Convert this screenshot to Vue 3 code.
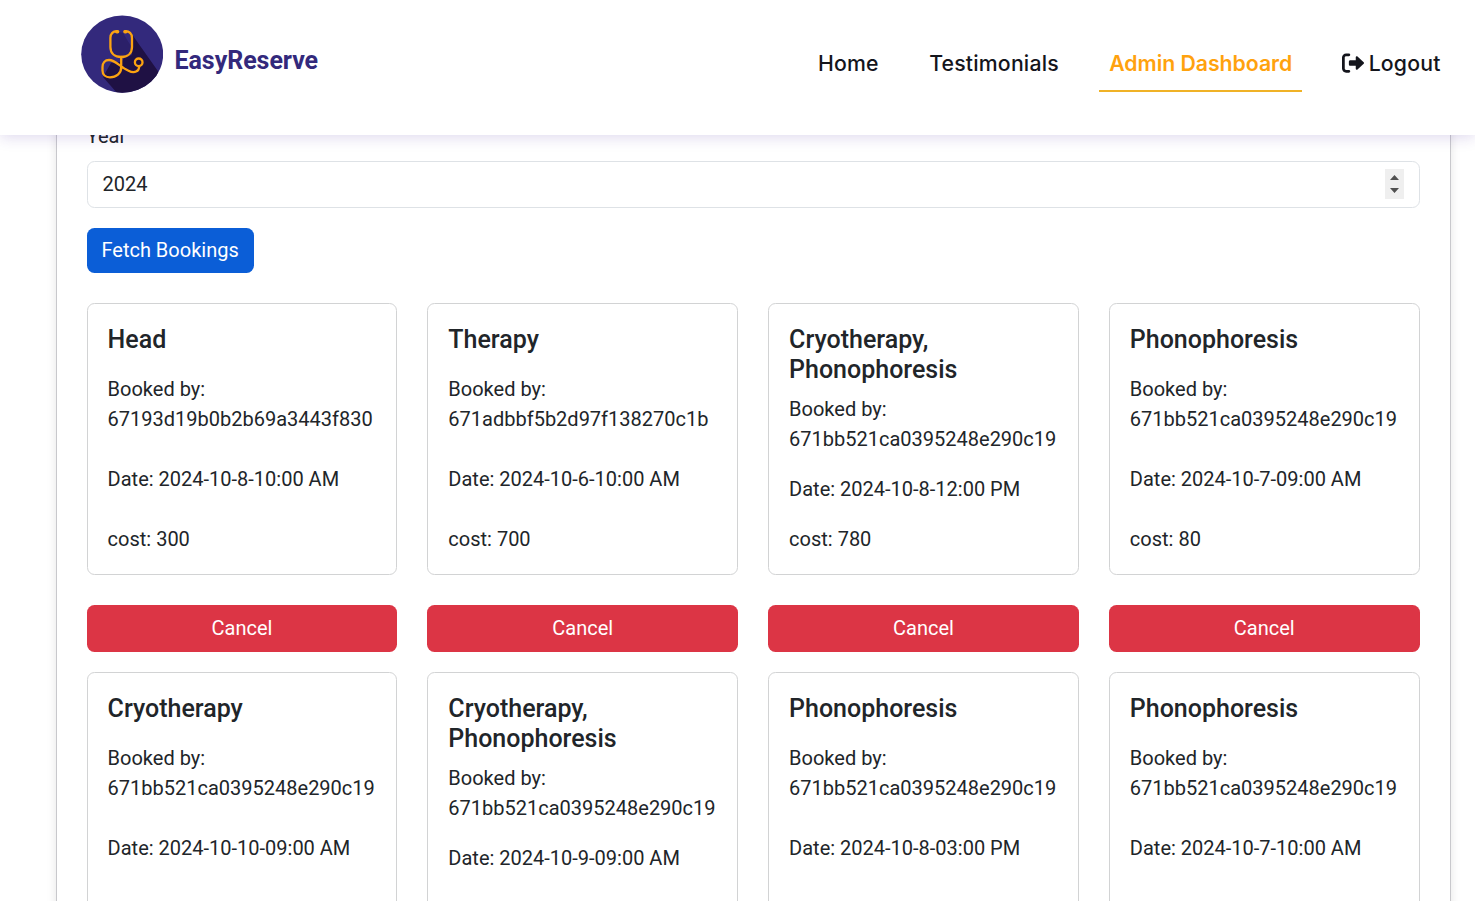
<script setup>
const id = '671bb521ca0395248e290c19'
const bookings = [
  { title: 'Head', by: '67193d19b0b2b69a3443f830', date: '2024-10-8-10:00 AM', cost: 300 },
  { title: 'Therapy', by: '671adbbf5b2d97f138270c1b', date: '2024-10-6-10:00 AM', cost: 700 },
  { title: 'Cryotherapy, Phonophoresis', by: id, date: '2024-10-8-12:00 PM', cost: 780 },
  { title: 'Phonophoresis', by: id, date: '2024-10-7-09:00 AM', cost: 80 },
  { title: 'Cryotherapy', by: id, date: '2024-10-10-09:00 AM' },
  { title: 'Cryotherapy, Phonophoresis', by: id, date: '2024-10-9-09:00 AM' },
  { title: 'Phonophoresis', by: id, date: '2024-10-8-03:00 PM' },
  { title: 'Phonophoresis', by: id, date: '2024-10-7-10:00 AM' },
]
</script>

<template>
  <div class="page">
    <header class="navbar">
      <a class="brand">
        <svg class="logo" width="82" height="78" viewBox="0 0 82 78">
          <defs>
            <clipPath id="disc"><ellipse cx="41.2" cy="39.2" rx="41" ry="38.600" /></clipPath>
          </defs>
          <g clip-path="url(#disc)">
            <rect width="82" height="78" fill="#33297c" />
            <path d="M43 18L50 18L79 59L66 78L36 78L22 62L30 48L40 47L51 34Z" fill="#1f1144" />
            <path d="M40.200 17L51 33V23L47 17Z" fill="#33297c" />
            <path d="M42 18L51 33V40L46 42L34 40L30 34V20L38 17Z" fill="#2b2069" />
          </g>
          <g fill="none" stroke="#fca311" stroke-width="2.3" stroke-linecap="round" stroke-linejoin="round">
            <path d="M36.5 16.3C32 15.8 29.4 18.7 29.4 23V32C29.4 38.5 34 42 40.2 42S51 38.5 51 32V23C51 18.7 48.3 15.8 43.8 16.3" />
            <path d="M40.2 42V52.5C40.2 58.5 35.2 62.3 29 62.3C24.5 62.3 21.5 59.8 21.5 55.4V52C21.5 47.8 24 45 28 45C34.5 45 39.5 52.4 47.5 55.7C53.5 58.7 58.2 56.5 58.2 51.2" />
            <circle cx="57.7" cy="47.3" r="3.8" />
          </g>
          <g stroke="#fca311" stroke-width="3.6" stroke-linecap="round">
            <path d="M35.800 16.7h.8M44 16.7h.8" />
          </g>
        </svg>
        <span class="name">EasyReserve</span>
      </a>
      <nav class="links">
        <a>Home</a>
        <a>Testimonials</a>
        <a class="active">Admin Dashboard</a>
        <a class="logout">
          <svg width="22" height="22" viewBox="0 0 512 512" fill="currentColor">
            <path d="M160 96c17.700 0 32-14.300 32-32s-14.300-32-32-32H96C43 32 0 75 0 128v256c0 53 43 96 96 96h64c17.700 0 32-14.300 32-32s-14.300-32-32-32H96c-17.700 0-32-14.300-32-32V128c0-17.700 14.300-32 32-32h64zM504.500 273.400c4.800-4.500 7.500-10.800 7.500-17.400s-2.700-12.900-7.500-17.400l-144-136c-7-6.600-17.200-8.400-26-4.600S320 110.400 320 120v72H192c-17.700 0-32 14.300-32 32v64c0 17.700 14.300 32 32 32h128v72c0 9.600 5.700 18.200 14.500 22s19 2 26-4.600l144-136z" />
          </svg>
          <span>Logout</span>
        </a>
      </nav>
    </header>

    <main class="panel">
      <label class="label">Year</label>
      <div class="input">
        <span>2024</span>
        <svg class="spinner" width="19" height="30" viewBox="0 0 19 30">
          <rect width="19" height="30" fill="#efefef" />
          <path d="M5 11L9.500 6L14 11ZM5 19H14L9.500 24Z" fill="#505050" />
        </svg>
      </div>
      <button class="fetch">Fetch Bookings</button>
      <div class="grid">
        <div v-for="(b, i) in bookings" :key="i" class="item">
          <article class="card">
            <h5>{{ b.title }}</h5>
            <p>Booked by: {{ b.by }}</p>
            <p>Date: {{ b.date }}</p>
            <p class="cost"><template v-if="b.cost">cost: {{ b.cost }}</template></p>
          </article>
          <button v-if="b.cost" class="cancel">Cancel</button>
        </div>
      </div>
    </main>
  </div>
</template>

<style>
body {
  margin: 0;
  overflow: hidden;
}
</style>

<style scoped>
* {
  box-sizing: border-box;
}
.page {
  height: 901px;
  overflow: hidden;
  background: #fff;
  color: #212529;
  font: 20px/30px Roboto, sans-serif;
}
.navbar {
  position: relative;
  z-index: 1;
  display: flex;
  justify-content: space-between;
  height: 135px;
  padding: 15px 24.4px 0 81px;
  background: #fff;
  box-shadow: 0 2px 14px rgba(64, 31, 155, 0.18);
}
.brand {
  display: flex;
  height: 78px;
}
.logo {
  display: block;
}
.name {
  margin: 31px 0 0 11.5px;
  color: #33297c;
  font-size: 25px;
  font-weight: 700;
  letter-spacing: -0.05px;
}
.links {
  display: flex;
  gap: 30.4px;
  height: 77px;
  padding-top: 20px;
  color: #14151c;
  font: 500 21.25px/56px Inter, sans-serif;
  letter-spacing: 0.18px;
}
.links a {
  height: 57px;
  padding: 0 10px;
  white-space: nowrap;
}
.links .active {
  color: #ffa20d;
  border-bottom: 2px solid #f0b226;
  font-weight: 600;
  letter-spacing: -0.03px;
}
.links .logout {
  display: flex;
  align-items: center;
  gap: 5px;
  height: 55px;
  margin-left: -1px;
}
.panel {
  width: 1395px;
  height: 1000px;
  margin: -16px 0 0 55.6px;
  padding: 1px 30px 0;
  border: 1px solid #c8c8cc;
  box-shadow: 0 0 10px rgba(0, 0, 0, 0.1);
}
.label {
  display: block;
  height: 40px;
}
.input {
  display: flex;
  align-items: center;
  justify-content: space-between;
  height: 47px;
  padding: 0 15px 2px;
  border: 1px solid #dee2e6;
  border-radius: 7.5px;
}
.spinner {
  display: block;
}
button {
  border: 0;
  border-radius: 7.5px;
  color: #fff;
  font: 20px/30px Roboto, sans-serif;
}
.fetch {
  display: block;
  width: 167px;
  height: 45px;
  margin: 20px 0 30px;
  padding: 0 0 2px;
  background: #0b5ed7;
}
.grid {
  display: grid;
  grid-template-columns: repeat(4, minmax(0, 1fr));
  gap: 20px 30px;
}
.card {
  display: flex;
  flex-direction: column;
  justify-content: space-between;
  height: 272px;
  padding: 20px;
  border: 1px solid #d2d3d4;
  border-radius: 7.5px;
}
.card h5 {
  margin: 0 0 9px;
  padding-top: 1px;
  font-size: 25px;
  font-weight: 500;
  line-height: 30px;
}
.card p {
  margin: 0 0 20px;
}
.card .cost {
  height: 30px;
  margin: 0;
}
.cancel {
  display: block;
  width: 100%;
  height: 47px;
  margin-top: 30px;
  padding: 0 0 2px;
  background: #dc3545;
}
</style>
